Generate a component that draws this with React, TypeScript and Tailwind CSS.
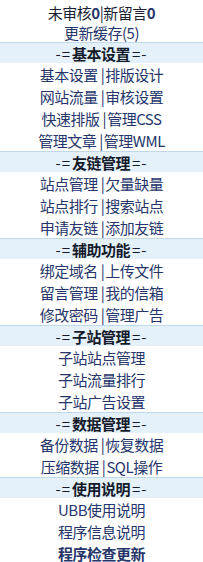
import React from "react";

const font = { fontFamily: '"Noto Sans CJK SC", "Noto Sans", sans-serif' };

function Item({ children, bold = false }: { children: React.ReactNode; bold?: boolean }) {
  return (
    <div className={`h-[22px] flex items-center justify-center text-[15px] tracking-[-0.5px] leading-none text-[#26366b] whitespace-nowrap ${bold ? "font-bold" : ""}`}>
      {children}
    </div>
  );
}

function Header({ title }: { title: string }) {
  return (
    <div className="h-[21px] flex items-center justify-center border-t border-[#bfd8ea] bg-[#e4f1fa] text-[15px] tracking-[-0.5px] leading-none font-bold text-[#141a2a] whitespace-nowrap">
      <span className="font-normal tracking-[1px] pr-[1px]">-=</span>
      <span>{title}</span>
      <span className="font-normal tracking-[1px] pl-[2px]">=-</span>
    </div>
  );
}

function Pair({ a, b }: { a: string; b: string }) {
  return (
    <Item>
      <span>{a}</span>
      <span className="pl-[3px] pr-[1px]">|</span>
      <span>{b}</span>
    </Item>
  );
}

export default function App() {
  return (
    <div className="w-[203px] h-[562px] overflow-hidden bg-white pt-[2px]" style={font}>
      <div className="h-[20px] flex items-center justify-center text-[15px] tracking-[-0.5px] leading-none text-[#1a1f33] whitespace-nowrap">
        未审核<b className="text-[#26366b]">0</b>|新留言<b className="text-[#26366b]">0</b>
      </div>
      <div className="h-[20px] flex items-center justify-center text-[15px] tracking-[-0.5px] leading-none text-[#26366b] whitespace-nowrap">
        更新缓存(5)
      </div>
      <Header title="基本设置" />
      <Pair a="基本设置" b="排版设计" />
      <Pair a="网站流量" b="审核设置" />
      <Pair a="快速排版" b="管理CSS" />
      <Pair a="管理文章" b="管理WML" />
      <Header title="友链管理" />
      <Pair a="站点管理" b="欠量缺量" />
      <Pair a="站点排行" b="搜索站点" />
      <Pair a="申请友链" b="添加友链" />
      <Header title="辅助功能" />
      <Pair a="绑定域名" b="上传文件" />
      <Pair a="留言管理" b="我的信箱" />
      <Pair a="修改密码" b="管理广告" />
      <Header title="子站管理" />
      <Item>子站站点管理</Item>
      <Item>子站流量排行</Item>
      <Item>子站广告设置</Item>
      <Header title="数据管理" />
      <Pair a="备份数据" b="恢复数据" />
      <Pair a="压缩数据" b="SQL操作" />
      <Header title="使用说明" />
      <Item>UBB使用说明</Item>
      <Item>程序信息说明</Item>
      <Item bold>程序检查更新</Item>
    </div>
  );
}
